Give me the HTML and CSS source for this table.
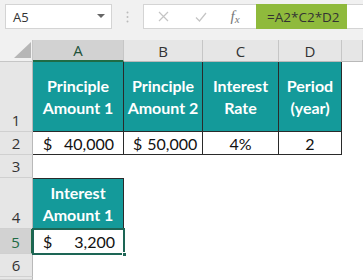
FILE: index.html
```html
<!DOCTYPE html>
<html>
<head>
<meta charset="utf-8">
<link rel="stylesheet" href="styles.css">
</head>
<body>
<div class="ribbon">
  <div class="name-box">
    <span>A5</span>
    <svg class="caret" width="8" height="4" viewBox="0 0 8 4"><path d="M0 0h8L4 4z" fill="#666"/></svg>
  </div>
  <div class="grip">
    <svg width="3" height="12" viewBox="0 0 3 12"><circle cx="1.5" cy="1.5" r="1" fill="#bbb"/><circle cx="1.5" cy="6" r="1" fill="#bbb"/><circle cx="1.5" cy="10.5" r="1" fill="#bbb"/></svg>
  </div>
  <div class="input">
    <span class="tool"><svg width="11" height="11" viewBox="0 0 11 11"><path d="M1 1l9 9M10 1l-9 9" stroke="#c4c4c4" stroke-width="1.2" fill="none"/></svg></span>
    <span class="tool"><svg width="12" height="10" viewBox="0 0 12 10"><path d="M1 5.5l3.5 3.5L11 1" stroke="#c4c4c4" stroke-width="1.2" fill="none"/></svg></span>
    <span class="tool fx"><i>f</i><i class="x">x</i></span>
    <span class="formula">=A2*C2*D2</span>
  </div>
</div>

<div class="sheet">
  <!-- column headers -->
  <div class="corner"><svg width="17" height="16" viewBox="0 0 17 16"><path d="M17 0V16H0z" fill="#b6b6b6"/></svg></div>
  <div class="col-h active">A</div>
  <div class="col-h">B</div>
  <div class="col-h">C</div>
  <div class="col-h">D</div>
  <div class="col-h"></div>

  <!-- row 1 -->
  <div class="row-h">1</div>
  <div class="head">Principle<br>Amount 1</div>
  <div class="head">Principle<br>Amount 2</div>
  <div class="head">Interest<br>Rate</div>
  <div class="head">Period<br>(year)</div>
  <div class="c"></div>

  <!-- row 2 -->
  <div class="row-h">2</div>
  <div class="val acct"><span>$</span><span>40,000</span></div>
  <div class="val acct tight"><span>$</span><span>50,000</span></div>
  <div class="val mid">4%</div>
  <div class="val mid">2</div>
  <div class="c"></div>

  <!-- row 3 -->
  <div class="row-h">3</div>
  <div class="c"></div><div class="c"></div><div class="c"></div><div class="c"></div><div class="c"></div>

  <!-- row 4 -->
  <div class="row-h">4</div>
  <div class="head solo">Interest<br>Amount 1</div>
  <div class="c"></div><div class="c"></div><div class="c"></div><div class="c"></div>

  <!-- row 5 -->
  <div class="row-h active">5</div>
  <div class="val acct selected"><span>$</span><span>3,200</span><i class="handle"></i></div>
  <div class="c"></div><div class="c"></div><div class="c"></div><div class="c"></div>

  <!-- row 6 -->
  <div class="row-h">6</div>
  <div class="c"></div><div class="c"></div><div class="c"></div><div class="c"></div><div class="c"></div>

  <!-- top sliver of the next row -->
  <div class="row-h"></div>
  <div class="c"></div><div class="c"></div><div class="c"></div><div class="c"></div><div class="c"></div>
</div>
</body>
</html>
```

FILE: styles.css
```css
* { box-sizing: border-box; }

html, body {
  margin: 0;
  padding: 0;
}

body {
  width: 363px;
  height: 280px;
  overflow: hidden;
  background: #fff;
  font-family: "Open Sans", "Noto Sans", sans-serif;
}

/* formula bar */
.ribbon {
  display: flex;
  align-items: stretch;
  height: 40px;
  padding: 4px 0 11px 5px;
  background: #f1f1f1;
}

.name-box {
  width: 107px;
  display: flex;
  align-items: center;
  justify-content: space-between;
  padding: 0 6px 0 7px;
  background: #fff;
  border: 1px solid #d4d4d4;
  font-size: 13px;
  color: #333;
}

.caret { margin-bottom: 2px; }

.grip {
  width: 31px;
  display: flex;
  align-items: center;
  justify-content: center;
}

.input {
  flex: 1;
  display: flex;
  align-items: stretch;
  background: #fff;
  border: 1px solid #d4d4d4;
  border-right: none;
}

.tool {
  width: 38px;
  display: flex;
  align-items: center;
  justify-content: center;
}

.tool.fx {
  width: 30px;
  font-family: "Liberation Serif", serif;
  font-size: 15px;
  color: #777;
}

.tool.fx .x {
  font-size: 11px;
  margin-top: 4px;
}

.formula {
  margin-left: 6px;
  width: 91px;
  margin-top: -1px;
  margin-bottom: -1px;
  display: flex;
  align-items: center;
  padding-left: 11px;
  background: #8fba3c;
  font-size: 13.5px;
  color: #333;
}

/* worksheet grid */
.sheet {
  display: grid;
  grid-template-columns: 33px 91px 79px 76px 63px 21px;
  grid-template-rows: 22px 70px 23px 23px 51px 25px 23px 3px;
  font-family: "Lato", "Open Sans", sans-serif;
}

.corner {
  background: #f1f1f1;
  border-right: 1px solid #c6c6c6;
  border-bottom: 1px solid #c6c6c6;
  display: flex;
  align-items: flex-end;
  justify-content: flex-end;
  padding: 0 1px 3px 0;
}

.col-h {
  background: #e6e6e6;
  border-right: 1px solid #c6c6c6;
  border-bottom: 1px solid #b9b9b9;
  display: flex;
  align-items: center;
  justify-content: center;
  font-family: "Open Sans", "Noto Sans", sans-serif;
  font-size: 15px;
  color: #333;
}

.col-h.active {
  background: #d2d2d2;
  border-bottom: 2px solid #1f6b45;
  color: #21523a;
}

.row-h {
  background: #e6e6e6;
  border-right: 1px solid #b9b9b9;
  border-bottom: 1px solid #d0d0d0;
  display: flex;
  align-items: flex-end;
  justify-content: center;
  line-height: 21px;
  font-family: "Open Sans", "Noto Sans", sans-serif;
  font-size: 15px;
  color: #333;
}

.row-h.active {
  background: #d2d2d2;
  border-right: 2px solid #1f6b45;
  color: #1f6b45;
}

.c { background: #fff; }

.head {
  background: #149a9a;
  border-right: 1px solid #2a2a2a;
  border-bottom: 1px solid #2a2a2a;
  display: flex;
  align-items: center;
  justify-content: center;
  text-align: center;
  color: #fff;
  font-weight: 700;
  font-size: 16px;
  line-height: 22px;
}

.head.solo { border-top: 1px solid #2a2a2a; }

.val {
  background: #fff;
  border-right: 1px solid #2a2a2a;
  border-bottom: 1px solid #2a2a2a;
  display: flex;
  align-items: center;
  font-size: 16px;
  color: #111;
}

.val.acct {
  justify-content: space-between;
  padding: 0 9px 0 10px;
}

.val.acct.tight {
  justify-content: flex-start;
  gap: 5px;
  padding-left: 9px;
}

.val.mid { justify-content: center; }

.val.selected {
  position: relative;
  border: none;
  outline: 2px solid #1d6555;
  outline-offset: -1px;
}

.handle {
  position: absolute;
  right: -3px;
  bottom: -3px;
  width: 5px;
  height: 5px;
  background: #1d6555;
  border: 1px solid #fff;
}
```
